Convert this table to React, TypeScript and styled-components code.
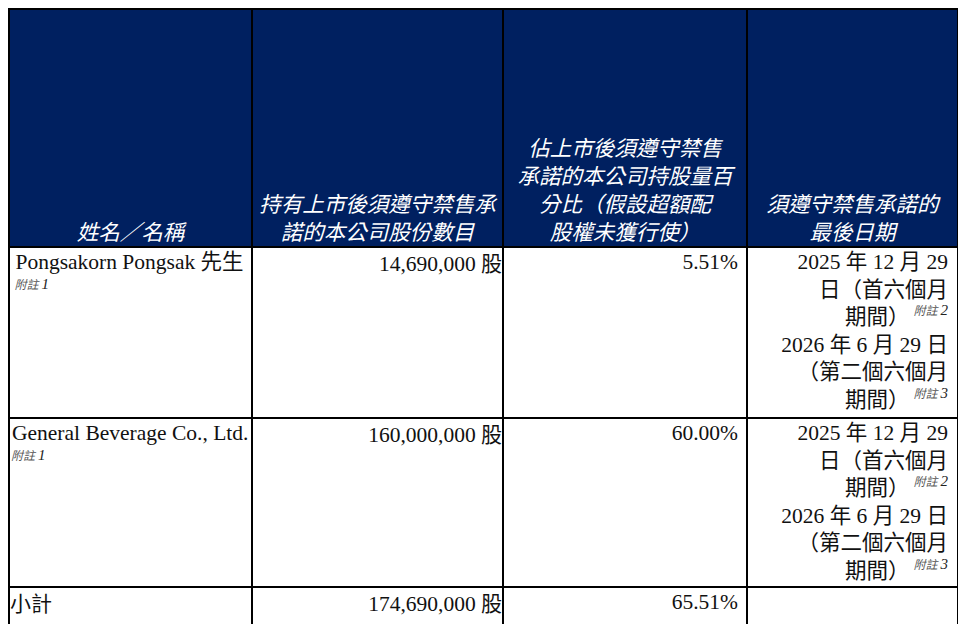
import React from "react";
import styled, { createGlobalStyle } from "styled-components";

const GlobalStyle = createGlobalStyle`
  html, body {
    margin: 0;
    padding: 0;
    overflow: hidden;
    background: #ffffff;
  }
  body {
    font-family: "Liberation Serif", "Noto Sans CJK TC", serif;
  }
`;

const Page = styled.div`
  width: 958px;
  height: 624px;
  box-sizing: border-box;
  padding: 8px 0 0 8px;
  overflow: hidden;
`;

const Table = styled.table`
  border-collapse: collapse;
  table-layout: fixed;
  width: 949px;
`;

const Col = styled.col<{ $w: number }>`
  width: ${(p) => p.$w}px;
`;

const HeadCell = styled.th`
  background: #002060;
  color: #ffffff;
  font-family: "Noto Sans CJK TC", sans-serif;
  font-style: italic;
  font-weight: 400;
  font-size: 21.5px;
  line-height: 28px;
  text-align: center;
  vertical-align: bottom;
  height: 235px;
  padding: 0 2px 1px;
  border: 2px solid #000000;
`;

const Cell = styled.td<{ $align?: "left" | "right" | "center"; $pr?: number; $pl?: number }>`
  border: 2px solid #000000;
  vertical-align: top;
  text-align: ${(p) => p.$align || "left"};
  padding: 1px ${(p) => p.$pr ?? 4}px 0 ${(p) => p.$pl ?? 2}px;
  font-size: 21.5px;
  line-height: 27.5px;
  color: #111111;
`;

const Row = styled.tr<{ $h?: number }>`
  height: ${(p) => (p.$h ? `${p.$h}px` : "auto")};
`;

const NameBlock = styled.div`
  text-align: center;
`;

const NameInner = styled.div`
  display: inline-block;
  text-align: left;
  white-space: nowrap;
`;

const Line = styled.div`
  height: 27.5px;
  line-height: 27.5px;
  white-space: nowrap;
`;

const Note = styled.div`
  font-size: 12px;
  line-height: 14px;
  font-style: italic;
  color: #555555;
  margin-top: 0;
  margin-left: -1px;
`;

const NoteNum = styled.span`
  font-family: "Liberation Serif", serif;
  font-size: 15px;
  color: #222222;
`;

const Sup = styled.span`
  font-size: 12px;
  font-style: italic;
  color: #555555;
  position: relative;
  top: -9px;
  margin-left: 4px;
`;

const Unit = styled.span`
  font-family: "Noto Sans CJK TC", sans-serif;
  font-size: 21px;
`;

function DateLines({ n1, n2 }: { n1: string; n2: string }) {
  return (
    <>
      <Line>2025 年 12 月 29</Line>
      <Line>日（首六個月</Line>
      <Line>
        期間）
        <Sup>
          附註 <NoteNum>{n1}</NoteNum>
        </Sup>
      </Line>
      <Line>2026 年 6 月 29 日</Line>
      <Line>（第二個六個月</Line>
      <Line>
        期間）
        <Sup>
          附註 <NoteNum>{n2}</NoteNum>
        </Sup>
      </Line>
    </>
  );
}

function Name({ children }: { children: React.ReactNode }) {
  return (
    <NameBlock>
      <NameInner>
        <Line>{children}</Line>
        <Note>
          附註 <NoteNum>1</NoteNum>
        </Note>
      </NameInner>
    </NameBlock>
  );
}

export default function App() {
  return (
    <Page>
      <GlobalStyle />
      <Table>
        <colgroup>
          <Col $w={243} />
          <Col $w={251} />
          <Col $w={244} />
          <Col $w={211} />
        </colgroup>
        <thead>
          <tr>
            <HeadCell>姓名／名稱</HeadCell>
            <HeadCell>
              持有上市後須遵守禁售承
              <br />
              諾的本公司股份數目
            </HeadCell>
            <HeadCell>
              佔上市後須遵守禁售
              <br />
              承諾的本公司持股量百
              <br />
              分比（假設超額配
              <br />
              股權未獲行使）
            </HeadCell>
            <HeadCell>
              須遵守禁售承諾的
              <br />
              最後日期
            </HeadCell>
          </tr>
        </thead>
        <tbody>
          <Row $h={171}>
            <Cell>
              <Name>Pongsakorn Pongsak 先生</Name>
            </Cell>
            <Cell $align="right" $pr={0}>
              <Line>
                14,690,000 <Unit>股</Unit>
              </Line>
            </Cell>
            <Cell $align="right" $pr={8}>
              <Line>5.51%</Line>
            </Cell>
            <Cell $align="right" $pr={9}>
              <DateLines n1="2" n2="3" />
            </Cell>
          </Row>
          <Row $h={169}>
            <Cell>
              <Name>General Beverage Co., Ltd.</Name>
            </Cell>
            <Cell $align="right" $pr={0}>
              <Line>
                160,000,000 <Unit>股</Unit>
              </Line>
            </Cell>
            <Cell $align="right" $pr={8}>
              <Line>60.00%</Line>
            </Cell>
            <Cell $align="right" $pr={9}>
              <DateLines n1="2" n2="3" />
            </Cell>
          </Row>
          <Row $h={60}>
            <Cell $pl={0}>
              <Line>
                <Unit>小計</Unit>
              </Line>
            </Cell>
            <Cell $align="right" $pr={0}>
              <Line>
                174,690,000 <Unit>股</Unit>
              </Line>
            </Cell>
            <Cell $align="right" $pr={8}>
              <Line>65.51%</Line>
            </Cell>
            <Cell />
          </Row>
        </tbody>
      </Table>
    </Page>
  );
}
